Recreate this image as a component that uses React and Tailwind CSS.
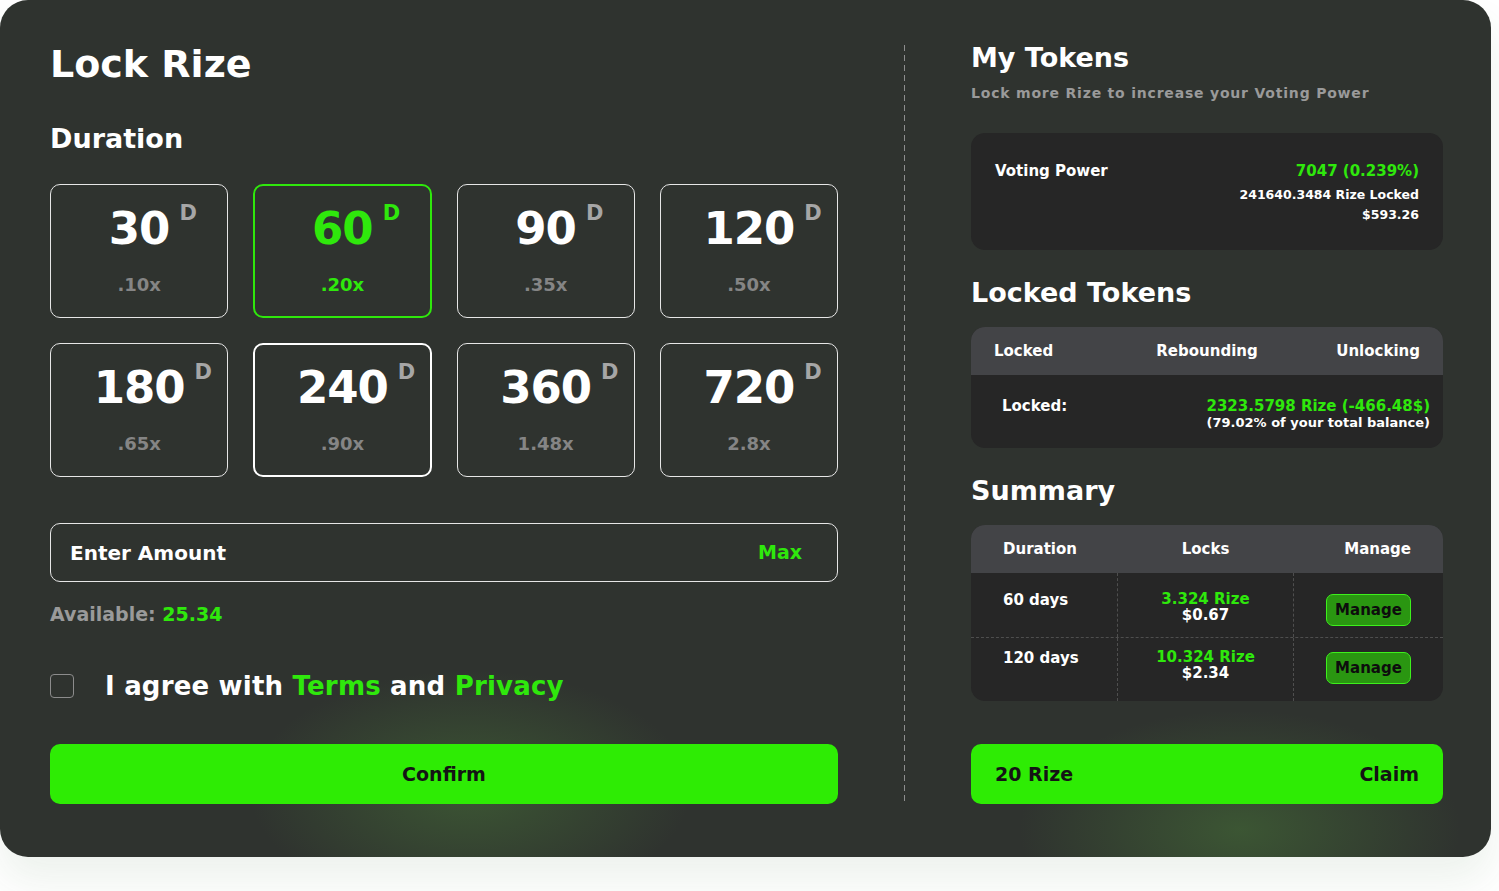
import React, { useState } from 'react';

const durations = [
    { days: '30', mult: '.10x' },
    { days: '60', mult: '.20x' },
    { days: '90', mult: '.35x' },
    { days: '120', mult: '.50x' },
    { days: '180', mult: '.65x' },
    { days: '240', mult: '.90x' },
    { days: '360', mult: '1.48x' },
    { days: '720', mult: '2.8x' },
];

const locks = [
    { duration: '60 days', rize: '3.324 Rize', usd: '$0.67', pt: 'pt-[18px]', btn: 'pt-[21px]' },
    { duration: '120 days', rize: '10.324 Rize', usd: '$2.34', pt: 'pt-[11px]', btn: 'pt-[14px]' },
];

const DurationBox = ({ item, selected, focused, onClick }) => {
    let border = 'border border-[#e6e6e6]';
    if (selected) border = 'border-2 border-[#2fe80c]';
    else if (focused) border = 'border-2 border-white';

    return (
        <button
            type="button"
            onClick={onClick}
            className={`h-[134px] rounded-[10px] ${border} flex flex-col items-center ${selected || focused ? 'pt-[20px]' : 'pt-[21px]'}`}
        >
            <span className={`relative text-[45px] leading-[45px] font-bold tracking-[-1px] ${selected ? 'text-[#2fe80c]' : 'text-white'}`}>
                {item.days}
                <span className={`absolute left-full top-[-3px] ml-[10px] text-[21px] leading-[21px] font-bold tracking-normal ${selected ? 'text-[#2fe80c]' : 'text-[#a6a6a6]'}`}>
                    D
                </span>
            </span>
            <span className={`mt-[24px] text-[18px] leading-[20px] font-bold ${selected ? 'text-[#2fe80c]' : 'text-[#858585]'}`}>
                {item.mult}
            </span>
        </button>
    );
};

const App = () => {
    const [selected, setSelected] = useState(1);
    const [agree, setAgree] = useState(false);

    return (
        <div className="w-[1499px] h-[891px] bg-white font-['DejaVu_Sans',sans-serif]">
            <div className="relative w-[1491px] h-[857px] rounded-[28px] bg-[#2f332f] overflow-hidden shadow-[0_24px_40px_rgba(60,110,50,0.09)]">
                {/* soft green glows */}
                <div className="pointer-events-none absolute left-[230px] top-[660px] w-[480px] h-[260px] rounded-full bg-[radial-gradient(ellipse_at_center,rgba(72,120,56,0.5),rgba(72,120,56,0)_65%)]" />
                <div className="pointer-events-none absolute left-[1000px] top-[700px] w-[480px] h-[260px] rounded-full bg-[radial-gradient(ellipse_at_center,rgba(72,120,56,0.5),rgba(72,120,56,0)_65%)]" />

                <div className="relative flex items-start pl-[50px]">
                    {/* left column */}
                    <div className="w-[788px] shrink-0 pt-[40px]">
                        <h1 className="text-[38px] leading-[48px] font-bold text-white">Lock Rize</h1>
                        <h2 className="mt-[34px] text-[27px] leading-[34px] font-bold text-white">Duration</h2>

                        <div className="mt-[28px] grid grid-cols-4 gap-[25px]">
                            {durations.map((d, i) => (
                                <DurationBox
                                    key={d.days}
                                    item={d}
                                    selected={selected === i}
                                    focused={i === 5}
                                    onClick={() => setSelected(i)}
                                />
                            ))}
                        </div>

                        <div className="mt-[46px] h-[59px] rounded-[10px] border border-[#e6e6e6] flex items-center justify-between pl-[19px] pr-[35px]">
                            <span className="text-[20px] font-bold text-white">Enter Amount</span>
                            <span className="text-[19px] font-bold text-[#2fe80c]">Max</span>
                        </div>

                        <div className="mt-[20px] text-[19px] leading-[24px] font-bold">
                            <span className="text-[#9a9a9a]">Available: </span>
                            <span className="text-[#2fe80c]">25.34</span>
                        </div>

                        <div className="mt-[44px] h-[32px] flex items-center">
                            <button
                                type="button"
                                onClick={() => setAgree(!agree)}
                                className={`w-[24px] h-[24px] rounded-[4px] border border-[#8c8c8c] ${agree ? 'bg-[#2fe80c]' : ''}`}
                            />
                            <span className="ml-[31px] text-[26px] tracking-[0.2px] font-bold text-white">
                                I agree with <span className="text-[#2fe80c]">Terms</span> and <span className="text-[#2fe80c]">Privacy</span>
                            </span>
                        </div>

                        <button
                            type="button"
                            className="mt-[42px] w-full h-[60px] rounded-[10px] bg-[#2eec04] text-[19px] font-bold text-[#141414]"
                        >
                            Confirm
                        </button>
                    </div>

                    {/* divider */}
                    <div className="ml-[66px] mt-[45px] w-px shrink-0 h-[758px] bg-[repeating-linear-gradient(to_bottom,#8e8e8e_0_6px,transparent_6px_10px)]" />

                    {/* right column */}
                    <div className="ml-[66px] w-[472px] shrink-0 pt-[41px]">
                        <h2 className="text-[27px] leading-[34px] font-bold text-white">My Tokens</h2>
                        <p className="mt-[8px] text-[14px] leading-[20px] tracking-[0.8px] font-semibold text-[#9a9a9a]">
                            Lock more Rize to increase your Voting Power
                        </p>

                        <div className="mt-[30px] h-[117px] rounded-[14px] bg-[#262626] px-[24px] pt-[28px] flex justify-between items-start">
                            <span className="text-[15px] leading-[20px] font-semibold text-white">Voting Power</span>
                            <div className="flex flex-col items-end">
                                <span className="text-[15px] leading-[20px] font-bold text-[#2fe80c]">7047 (0.239%)</span>
                                <span className="mt-[5px] text-[12.5px] leading-[18px] font-bold text-white">241640.3484 Rize Locked</span>
                                <span className="mt-[2px] text-[12.5px] leading-[18px] font-bold text-white">$593.26</span>
                            </div>
                        </div>

                        <h2 className="mt-[26px] text-[27px] leading-[34px] font-bold text-white">Locked Tokens</h2>

                        <div className="mt-[17px] rounded-[14px] overflow-hidden bg-[#262626]">
                            <div className="h-[48px] bg-[#434447] px-[23px] grid grid-cols-3 items-center text-[15px] font-bold text-white">
                                <span>Locked</span>
                                <span className="text-center">Rebounding</span>
                                <span className="text-right">Unlocking</span>
                            </div>
                            <div className="h-[73px] pl-[31px] pr-[13px] pt-[22px] flex justify-between items-start">
                                <span className="text-[15px] leading-[18px] font-bold text-white">Locked:</span>
                                <div className="flex flex-col items-end">
                                    <span className="text-[15px] leading-[18px] font-bold text-[#2fe80c]">2323.5798 Rize (-466.48$)</span>
                                    <span className="text-[13px] leading-[16px] font-semibold text-white">(79.02% of your total balance)</span>
                                </div>
                            </div>
                        </div>

                        <h2 className="mt-[26px] text-[27px] leading-[34px] font-bold text-white">Summary</h2>

                        <div className="mt-[17px] rounded-[14px] overflow-hidden bg-[#262626]">
                            <div className="h-[48px] bg-[#434447] grid grid-cols-[146px_177px_149px] items-center text-[15px] font-bold text-white">
                                <span className="pl-[32px]">Duration</span>
                                <span className="text-center">Locks</span>
                                <span className="text-right pr-[32px]">Manage</span>
                            </div>
                            {locks.map((l, i) => (
                                <div
                                    key={l.duration}
                                    className={`h-[64px] grid grid-cols-[146px_177px_149px] ${i > 0 ? 'border-t border-dashed border-[#4e4e4e]' : ''}`}
                                >
                                    <div className={`pl-[32px] ${l.pt} text-[15px] leading-[18px] font-bold text-white`}>{l.duration}</div>
                                    <div className={`border-x border-dashed border-[#4e4e4e] ${l.pt} flex flex-col items-center`}>
                                        <span className="text-[15px] leading-[16px] font-bold text-[#2fe80c]">{l.rize}</span>
                                        <span className="text-[15px] leading-[16px] font-bold text-white">{l.usd}</span>
                                    </div>
                                    <div className={`flex justify-center ${l.btn}`}>
                                        <button
                                            type="button"
                                            className="w-[85px] h-[32px] rounded-[7px] border-[1.5px] border-[#3df01c] bg-[#2a9611] text-[15px] font-bold text-[#0d0d0d]"
                                        >
                                            Manage
                                        </button>
                                    </div>
                                </div>
                            ))}
                        </div>

                        <button
                            type="button"
                            className="mt-[43px] w-full h-[60px] rounded-[10px] bg-[#2eec04] px-[24px] flex items-center justify-between text-[19px] font-bold text-[#141414]"
                        >
                            <span>20 Rize</span>
                            <span>Claim</span>
                        </button>
                    </div>
                </div>
            </div>
        </div>
    );
};

export default App;
